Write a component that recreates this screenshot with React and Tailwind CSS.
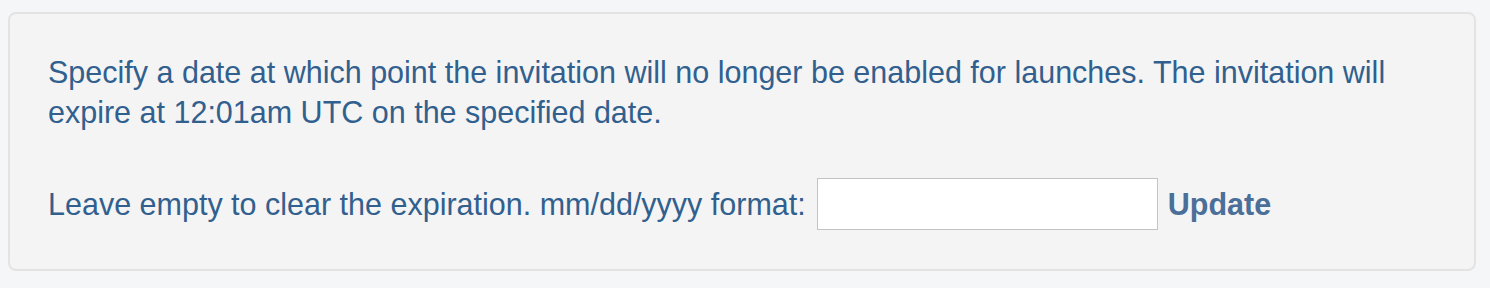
import React, { useState } from 'react'

export default function App() {
    const [ expiry, setExpiry ] = useState('')

    return (
        <div className="min-h-[288px] w-full bg-[#f5f6f8] pl-[8px] pr-[14px] pt-[12px] font-['Liberation_Sans',Arial,sans-serif] text-[30.5px] leading-[40px] text-[#31608e]">
            <div className="rounded-[8px] border-2 border-[#e3e3e3] bg-[#f4f4f4] px-[38px] pt-[38px] pb-[39px]">
                <p className="max-w-[1360px]">
                    Specify a date at which point the invitation will no longer be enabled for launches. The invitation will
                    expire at 12:01am UTC on the specified date.
                </p>
                <div className="mt-[46px] flex h-[52px] items-center">
                    <span>Leave empty to clear the expiration. mm/dd/yyyy format:</span>
                    <input
                        type="text"
                        value={expiry}
                        onChange={e => setExpiry(e.target.value)}
                        className="ml-[11px] h-[52px] w-[341px] border border-[#c4c4c4] bg-white px-2 outline-none"
                    />
                    <button type="button" className="ml-[10px] font-bold text-[#4a6f98]">
                        Update
                    </button>
                </div>
            </div>
        </div>
    )
}
